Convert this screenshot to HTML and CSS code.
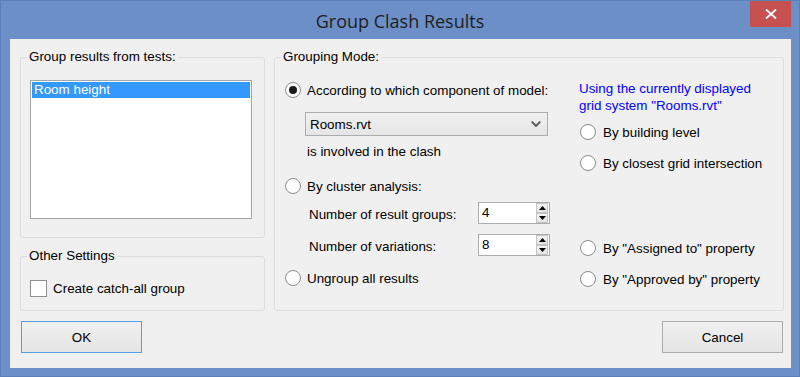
FILE: index.html
```html
<!DOCTYPE html>
<html>
<head>
<meta charset="utf-8">
<link rel="stylesheet" href="styles.css">
</head>
<body>
<div class="window">
  <div class="titlebar">
    <span class="title">Group Clash Results</span>
    <div class="close">
      <svg width="12" height="10" viewBox="0 0 12 10"><path d="M1 0.5 L11 9.5 M11 0.5 L1 9.5" stroke="#fff" stroke-width="1.8" fill="none"/></svg>
    </div>
  </div>
  <div class="content">
    <div class="left-col">
      <fieldset class="group group-tests">
        <legend>Group results from tests:</legend>
        <div class="listbox">
          <div class="list-item selected">Room height</div>
        </div>
      </fieldset>
      <fieldset class="group group-other">
        <legend>Other Settings</legend>
        <div class="check-row"><span class="checkbox"></span><span>Create catch-all group</span></div>
      </fieldset>
    </div>
    <fieldset class="group group-mode">
      <legend>Grouping Mode:</legend>
      <div class="mode-body">
        <div class="mode-left">
          <div class="radio-row"><span class="radio checked"></span><span>According to which component of model:</span></div>
          <div class="combo">
            <span>Rooms.rvt</span>
            <svg width="10" height="6" viewBox="0 0 10 6"><path d="M0.7 0.7 L5 5 L9.3 0.7" stroke="#555" stroke-width="1.8" fill="none"/></svg>
          </div>
          <div class="note">is involved in the clash</div>
          <div class="radio-row row-cluster"><span class="radio"></span><span>By cluster analysis:</span></div>
          <div class="spin-row spin-first">
            <span class="spin-label">Number of result groups:</span>
            <div class="spin">
              <span class="spin-value">4</span>
              <div class="spin-btns">
                <span class="spin-btn"><svg width="7" height="4" viewBox="0 0 7 4"><path d="M3.5 0 L7 4 L0 4 Z" fill="#000"/></svg></span>
                <span class="spin-btn"><svg width="7" height="4" viewBox="0 0 7 4"><path d="M0 0 L7 0 L3.5 4 Z" fill="#000"/></svg></span>
              </div>
            </div>
          </div>
          <div class="spin-row spin-second">
            <span class="spin-label">Number of variations:</span>
            <div class="spin">
              <span class="spin-value">8</span>
              <div class="spin-btns">
                <span class="spin-btn"><svg width="7" height="4" viewBox="0 0 7 4"><path d="M3.5 0 L7 4 L0 4 Z" fill="#000"/></svg></span>
                <span class="spin-btn"><svg width="7" height="4" viewBox="0 0 7 4"><path d="M0 0 L7 0 L3.5 4 Z" fill="#000"/></svg></span>
              </div>
            </div>
          </div>
          <div class="radio-row row-ungroup"><span class="radio"></span><span>Ungroup all results</span></div>
        </div>
        <div class="mode-right">
          <div class="grid-note">Using the currently displayed<br>grid system "Rooms.rvt"</div>
          <div class="radio-row r-level"><span class="radio"></span><span>By building level</span></div>
          <div class="radio-row r-closest"><span class="radio"></span><span>By closest grid intersection</span></div>
          <div class="radio-row r-assigned"><span class="radio"></span><span>By "Assigned to" property</span></div>
          <div class="radio-row r-approved"><span class="radio"></span><span>By "Approved by" property</span></div>
        </div>
      </div>
    </fieldset>
    <div class="btn-left"><button class="btn btn-default">OK</button></div>
    <div class="btn-right"><button class="btn">Cancel</button></div>
  </div>
</div>
</body>
</html>
```
FILE: styles.css
```css
* { box-sizing: border-box; }
html, body { margin: 0; padding: 0; }
body {
  width: 800px;
  height: 377px;
  overflow: hidden;
  font-family: "Liberation Sans", Arial, sans-serif;
  font-size: 13.4px;
  color: #000;
  background: #6b8fc6;
}
.window {
  width: 800px;
  height: 377px;
  border: 1px solid #5b80b8;
  background: #6b8fc6;
  display: flex;
  flex-direction: column;
}
.titlebar {
  height: 38px;
  display: grid;
  grid-template-columns: 1fr auto 1fr;
}
.title {
  grid-column: 2;
  font-family: "Open Sans", "Noto Sans", sans-serif;
  font-size: 18px;
  line-height: 22px;
  padding-top: 9px;
  color: #1e1e1e;
}
.close {
  grid-column: 3;
  justify-self: end;
  width: 41px;
  height: 26px;
  margin-right: 8px;
  background: #c75050;
  display: flex;
  align-items: center;
  justify-content: center;
}
.content {
  flex: 1;
  margin: 0 8px 8px 9px;
  background: #f0f0f0;
  display: grid;
  grid-template-columns: 245px 510px;
  grid-template-rows: auto auto;
  column-gap: 9px;
  row-gap: 10px;
  padding: 10px 0 0 10px;
  align-content: start;
}
.left-col {
  display: flex;
  flex-direction: column;
  gap: 10px;
}
.group {
  margin: 0;
  padding: 0;
  border: 1px solid #dcdcdc;
  border-radius: 3px;
  min-width: 0;
}
.group legend {
  padding: 0 2px;
  margin-left: -3px;
  line-height: 16px;
}
.group-mode legend { margin-left: -4px; }
.group-tests { padding: 15px 12px 18px 9px; }
.listbox {
  width: 222px;
  height: 139px;
  border: 1px solid #a3a6ab;
  background: #fff;
  padding: 1px;
}
.list-item {
  height: 16px;
  line-height: 16px;
  padding-left: 2px;
}
.list-item.selected { background: #3399ff; color: #fff; }
.group-other { padding: 14px 0 12px 9px; }
.check-row {
  height: 20px;
  display: flex;
  align-items: center;
}
.checkbox {
  width: 17px;
  height: 17px;
  border: 1px solid #8f8f8f;
  background: #fff;
  margin-right: 6px;
}
.group-mode { padding: 15px 0 0 10px; }
.mode-body { display: flex; }
.mode-left {
  width: 294px;
  display: flex;
  flex-direction: column;
  align-items: flex-start;
}
.mode-right {
  flex: 1;
  display: flex;
  flex-direction: column;
  align-items: flex-start;
}
.radio-row {
  height: 20px;
  display: flex;
  align-items: center;
  gap: 6px;
}
.mode-right .radio-row { gap: 7px; margin-left: 1px; }
.radio {
  width: 16px;
  height: 16px;
  border: 1px solid #8c8c8c;
  border-radius: 50%;
  background: #fff;
  display: flex;
  align-items: center;
  justify-content: center;
}
.radio.checked::after {
  content: "";
  width: 8px;
  height: 8px;
  border-radius: 50%;
  background: #1a1a1a;
}
.combo {
  margin-top: 12px;
  margin-left: 20px;
  width: 243px;
  height: 24px;
  border: 1px solid #acacac;
  background: linear-gradient(#f0f0f0, #e5e5e5);
  display: flex;
  align-items: center;
  justify-content: space-between;
  padding: 0 6px 0 4px;
}
.note {
  margin-top: 8px;
  margin-left: 22px;
  height: 16px;
  line-height: 16px;
}
.row-cluster { margin-top: 16px; }
.spin-row {
  margin-left: 24px;
  height: 22px;
  display: flex;
  align-items: center;
}
.spin-first { margin-top: 6px; }
.spin-second { margin-top: 10px; }
.spin-label { width: 169px; padding-top: 3px; }
.spin {
  width: 72px;
  height: 22px;
  border: 1px solid #abadb3;
  background: #fff;
  display: flex;
  justify-content: space-between;
}
.spin-value { padding-left: 3px; line-height: 20px; }
.spin-btns {
  width: 12px;
  margin: 0 1px 0 0;
  display: flex;
  flex-direction: column;
}
.spin-btn {
  height: 10px;
  border: 1px solid #c4c4c4;
  background: linear-gradient(#f4f4f4, #e4e4e4);
  display: flex;
  align-items: center;
  justify-content: center;
}
.row-ungroup { margin-top: 12px; }
.grid-note {
  color: #0000ff;
  line-height: 17px;
}
.r-level { margin-top: 8px; }
.r-closest { margin-top: 11px; }
.r-assigned { margin-top: 65px; }
.r-approved { margin-top: 11px; }
.btn {
  width: 121px;
  height: 32px;
  border: 1px solid #acacac;
  background: linear-gradient(#f0f0f0, #e5e5e5);
  font: inherit;
  color: #000;
  padding: 0;
}
.btn-default { border-color: #569de5; }
.btn-left { margin-left: 1px; }
.btn-right { justify-self: end; margin-right: 1px; }
```
